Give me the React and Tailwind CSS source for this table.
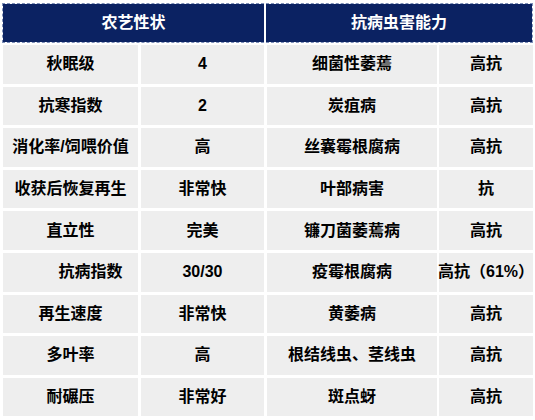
import React from 'react';

const rows = [
  ['秋眠级', '4', '细菌性萎蔫', '高抗'],
  ['抗寒指数', '2', '炭疽病', '高抗'],
  ['消化率/饲喂价值', '高', '丝囊霉根腐病', '高抗'],
  ['收获后恢复再生', '非常快', '叶部病害', '抗'],
  ['直立性', '完美', '镰刀菌萎蔫病', '高抗'],
  ['抗病指数', '30/30', '疫霉根腐病', '高抗（61%）'],
  ['再生速度', '非常快', '黄萎病', '高抗'],
  ['多叶率', '高', '根结线虫、茎线虫', '高抗'],
  ['耐碾压', '非常好', '斑点蚜', '高抗'],
];

const font = { fontFamily: '"Liberation Sans", "Noto Sans CJK SC", sans-serif' };

export default function App() {
  return (
    <div className="w-[535px] h-[420px] overflow-hidden bg-white pt-[3px] pl-[2px]" style={font}>
      {/* header */}
      <div className="flex h-[40px] w-[531px] border border-dashed border-[#7d8fb8] text-white text-[16px] font-bold">
        <div className="w-[261px] flex items-center justify-center bg-[#0b2262]">农艺性状</div>
        <div className="w-[2px] bg-white" />
        <div className="flex-1 flex items-center justify-center bg-[#0b2262]">抗病虫害能力</div>
      </div>
      {/* body */}
      <div className="flex flex-col gap-[3px] mt-[2px] pl-[1px]">
        {rows.map((r, i) => (
          <div key={i} className="flex h-[38.6px] text-[16px] font-bold text-black">
            <div className={`w-[135px] flex items-center justify-center bg-[#eeeeee] whitespace-nowrap ${i === 5 ? 'pl-[40px]' : ''}`}>{r[0]}</div>
            <div className="w-[3px]" />
            <div className="w-[123px] flex items-center justify-center bg-[#eeeeee]">{r[1]}</div>
            <div className="w-[3px]" />
            <div className="w-[170px] flex items-center justify-center bg-[#eeeeee] whitespace-nowrap">{r[2]}</div>
            <div className="w-[2px]" />
            <div className="w-[94px] flex items-center justify-center bg-[#eeeeee] whitespace-nowrap">{r[3]}</div>
          </div>
        ))}
      </div>
    </div>
  );
}
